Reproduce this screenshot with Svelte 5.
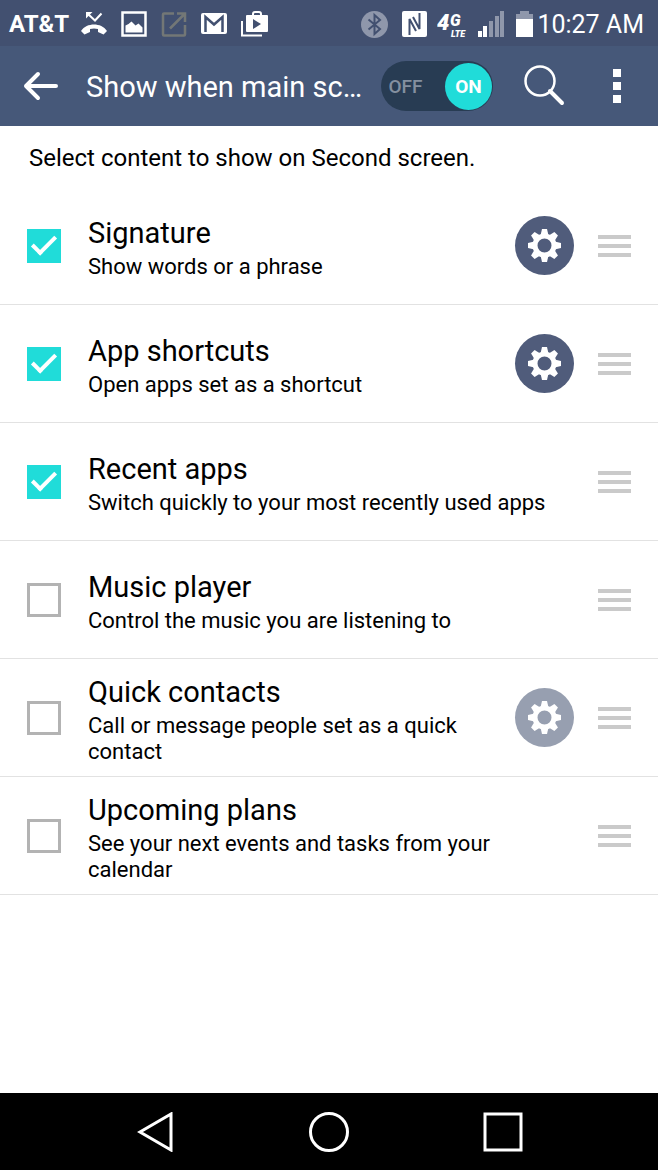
<script lang="ts">
	interface Item {
		id: string;
		title: string;
		detail: string;
		checked: boolean;
		settings: boolean;
	}

	let items = $state<Item[]>([
		{ id: 'signature', title: 'Signature', detail: 'Show words or a phrase', checked: true, settings: true },
		{ id: 'shortcuts', title: 'App shortcuts', detail: 'Open apps set as a shortcut', checked: true, settings: true },
		{ id: 'recent', title: 'Recent apps', detail: 'Switch quickly to your most recently used apps', checked: true, settings: false },
		{ id: 'music', title: 'Music player', detail: 'Control the music you are listening to', checked: false, settings: false },
		{ id: 'contacts', title: 'Quick contacts', detail: 'Call or message people set as a quick contact', checked: false, settings: true },
		{ id: 'plans', title: 'Upcoming plans', detail: 'See your next events and tasks from your calendar', checked: false, settings: false }
	]);

	let enabled = $state(true);
	const teeth = [0, 45, 90, 135, 180, 225, 270, 315];
</script>

<div class="screen">
	<div class="status">
		<div class="notifications">
			<span class="carrier">AT&amp;T</span>
			<svg width="26" height="26" viewBox="0 0 26 26" aria-hidden="true">
				<path d="M0 20C3 15.500 8 13.500 13 13.500s10 2 13 6.500l-3.500 3.500L17 21v-3q-4-1-8 0v3l-5.500 2.500Z" fill="#fff" />
				<path d="M5 1h6.500L5 7.500Z" fill="#fff" />
				<path d="M7 3l7 6.500 6.500-7" fill="none" stroke="#fff" stroke-width="2" />
			</svg>
			<svg width="26" height="26" viewBox="0 0 26 26" aria-hidden="true">
				<rect x="1.500" y="1.500" width="23" height="23" fill="none" stroke="#fff" stroke-width="2.500" />
				<path d="M4.500 21.500v-7l3-1.500 3-2.500 4 4 3-2 4 4v5Z" fill="#fff" />
			</svg>
			<svg width="26" height="26" viewBox="0 0 26 26" aria-hidden="true">
				<path d="M13 2.500H3Q2 2.500 2 3.500v20q0 1 1 1h20q1 0 1-1V14M16 2.500h8V11M24 2.500 9 17.500" fill="none" stroke="#737776" stroke-width="2.500" />
			</svg>
			<svg width="26" height="26" viewBox="0 0 26 26" aria-hidden="true">
				<rect y="2" width="26" height="21" rx="2" fill="#fff" />
				<path d="M4.500 21V6L13 13.500 21.500 6v15" fill="none" stroke="#425070" stroke-width="2.500" />
			</svg>
			<svg width="28" height="26" viewBox="0 0 28 26" aria-hidden="true">
				<path d="M1 10v14.500h20" fill="none" stroke="#fff" stroke-width="2" />
				<path d="M12 6V3q0-2 2-2h4q2 0 2 2v3" fill="none" stroke="#fff" stroke-width="2" />
				<rect x="5" y="4" width="22" height="17" rx="1" fill="#fff" />
				<path d="M12 8v10l8-5Z" fill="#425070" />
			</svg>
		</div>

		<div class="system">
			<svg width="27" height="27" viewBox="0 0 27 27" aria-hidden="true">
				<circle cx="13.500" cy="13.500" r="13.500" fill="#8f97ab" />
				<path d="M7.500 8.500 19 18l-5.500 5V4L19 9 7.500 18.500" fill="none" stroke="#425070" stroke-width="2" />
			</svg>
			<svg class="nfc" width="26" height="26" viewBox="0 0 26 26" aria-hidden="true">
				<rect x="1" width="25" height="26" rx="2" fill="#fff" />
				<path d="M8.500 24V8l6.500 12" fill="none" stroke="#425070" stroke-width="2" />
				<path d="M18.500 2v16L12 6" fill="none" stroke="#425070" stroke-width="2" />
			</svg>
			<svg class="network" width="34" height="26" viewBox="0 0 34 26" role="img" aria-label="4G LTE">
				<text x="0" y="19" font-size="22">4</text>
				<text x="13" y="15" font-size="16">G</text>
				<text x="14" y="26" font-size="9">LTE</text>
			</svg>
			<svg class="signal" width="26" height="26" viewBox="0 0 26 26" aria-hidden="true">
				<path d="M0 20h4v6H0ZM5 15h4v11H5Z" fill="#fff" />
				<path d="M11 10h4v16h-4ZM17 5h4v21h-4ZM22 0h4v26h-4Z" fill="#8f97ab" />
			</svg>
			<svg class="battery" width="17" height="26" viewBox="0 0 17 26" aria-hidden="true">
				<path d="M0 3h4V0h9v3h4v7H0Z" fill="#8f97ab" />
				<path d="M0 8h17v18H0Z" fill="#fff" />
			</svg>
			<span class="time">10:27 AM</span>
		</div>
	</div>

	<header>
		<button class="back" type="button" aria-label="Back">
			<svg width="36" height="30" viewBox="0 0 36 30">
				<path d="M15 3 3 15l12 12M3 15h30" fill="none" stroke="#fff" stroke-width="4" stroke-linecap="round" stroke-linejoin="round" />
			</svg>
		</button>
		<h1>Show when main sc…</h1>
		<button class="switch" class:enabled type="button" role="switch" aria-checked={enabled} aria-label="Second screen" onclick={() => (enabled = !enabled)}>
			<span>OFF</span>
			<span>ON</span>
		</button>
		<button class="search" type="button" aria-label="Search">
			<svg width="42" height="42" viewBox="0 0 42 42">
				<circle cx="17" cy="16" r="14.500" fill="none" stroke="#fff" stroke-width="2.500" />
				<path d="m27 26 12 12" stroke="#fff" stroke-width="4" stroke-linecap="round" />
			</svg>
		</button>
		<button class="more" type="button" aria-label="More options">
			<svg width="8" height="36" viewBox="0 0 8 36">
				<path d="M0 1h8v8H0ZM0 14h8v8H0ZM0 27h8v8H0Z" fill="#fff" />
			</svg>
		</button>
	</header>

	<main>
		<p class="intro">Select content to show on Second screen.</p>
		<ul>
			{#each items as item (item.id)}
				<li>
					<input type="checkbox" id={item.id} bind:checked={item.checked} />
					<label for={item.id}>
						<span class="title">{item.title}</span>
						<span class="detail">{item.detail}</span>
					</label>
					{#if item.settings}
						<button class="settings" type="button" disabled={!item.checked} aria-label={`${item.title} settings`}>
							<svg width="35" height="35" viewBox="-17.500 -17.500 35 35">
								<circle r="9.500" fill="none" stroke="#fff" stroke-width="5" />
								{#each teeth as angle}
									<path d="M-4-10-2.500-16.500h5L4-10Z" fill="#fff" transform={`rotate(${angle})`} />
								{/each}
							</svg>
						</button>
					{/if}
					<button class="handle" type="button" aria-label={`Move ${item.title}`}>
						<svg width="33" height="22" viewBox="0 0 33 22">
							<path d="M0 0h33v4H0ZM0 9h33v4H0ZM0 18h33v4H0Z" fill="#cacaca" />
						</svg>
					</button>
				</li>
			{/each}
		</ul>
	</main>

	<nav>
		<button type="button" aria-label="Back">
			<svg width="40" height="40" viewBox="0 0 40 40"><path d="M36 2v36L5 20Z" /></svg>
		</button>
		<button type="button" aria-label="Home">
			<svg width="40" height="40" viewBox="0 0 40 40"><circle cx="20" cy="20" r="18.500" /></svg>
		</button>
		<button type="button" aria-label="Recent apps">
			<svg width="40" height="40" viewBox="0 0 40 40"><path d="M2 2h36v36H2Z" /></svg>
		</button>
	</nav>
</div>

<style>
	:global(body) {
		margin: 0;
	}

	.screen {
		display: flex;
		flex-direction: column;
		min-height: 100vh;
		background: #fff;
		color: #000;
		font-family: Roboto, sans-serif;
	}

	button {
		display: grid;
		place-items: center;
		flex: none;
		padding: 0;
		border: none;
		background: none;
		font: inherit;
		cursor: pointer;
	}

	svg {
		display: block;
		flex: none;
	}

	.status {
		display: flex;
		justify-content: space-between;
		align-items: center;
		box-sizing: border-box;
		height: 46px;
		padding: 2px 14px 0 9px;
		background: #425070;
		color: #fff;
	}

	.notifications,
	.system {
		display: flex;
		align-items: center;
	}

	.notifications {
		gap: 14px;
	}

	.carrier {
		margin-right: -2px;
		font-size: 24px;
		font-weight: 700;
	}

	.nfc {
		margin-left: 13px;
	}

	.network {
		margin: 0 7px 0 10px;
		fill: #fff;
		font-style: italic;
		font-weight: 900;
	}

	.battery {
		margin: 0 4px 0 12px;
	}

	.time {
		font-size: 25px;
	}

	header {
		display: flex;
		align-items: center;
		height: 80px;
		padding: 0 37px 0 23px;
		background: #465879;
		color: #fff;
	}

	h1 {
		flex: 1;
		min-width: 0;
		margin: 0 14px 0 27px;
		padding-top: 2px;
		overflow: hidden;
		font-size: 29px;
		font-weight: 400;
		line-height: 40px;
		text-overflow: ellipsis;
		white-space: nowrap;
	}

	.switch {
		display: flex;
		justify-content: space-between;
		align-items: center;
		width: 112px;
		height: 50px;
		padding: 0 1px;
		border-radius: 25px;
		background: #283c53;
		color: #8490a0;
		font-size: 19px;
		font-weight: 500;
	}

	.switch span {
		display: grid;
		place-items: center;
		width: 47px;
		height: 47px;
		border-radius: 50%;
	}

	.switch.enabled span:last-child,
	.switch:not(.enabled) span:first-child {
		background: #20dcd9;
		color: #fff;
		font-weight: 700;
	}

	.search {
		margin: 0 48px 0 30px;
	}

	main {
		flex: 1;
	}

	.intro {
		margin: 0;
		padding: 18px 29px 15px;
		font-size: 24px;
		line-height: 28px;
	}

	ul {
		margin: 0;
		padding: 0;
		list-style: none;
	}

	li {
		display: flex;
		align-items: center;
		box-sizing: border-box;
		min-height: 118px;
		padding: 0 27px;
		border-bottom: 1px solid #e2e2e2;
	}

	input {
		display: grid;
		place-items: center;
		flex: none;
		box-sizing: border-box;
		width: 34px;
		height: 34px;
		margin: 0;
		border: 3px solid #b3b3b3;
		appearance: none;
	}

	input:checked {
		border-color: #20dcd9;
		background: #20dcd9;
	}

	input:checked::before {
		content: '';
		width: 20px;
		height: 9px;
		margin-bottom: 6px;
		border: solid #fff;
		border-width: 0 0 4px 4px;
		transform: rotate(-45deg);
	}

	label {
		flex: 1;
		min-width: 0;
		padding-left: 27px;
	}

	.title,
	.detail {
		display: block;
	}

	.title {
		font-size: 29px;
		line-height: 42px;
	}

	.detail {
		max-width: 464px;
		font-size: 22px;
		line-height: 26px;
	}

	.settings {
		width: 59px;
		height: 59px;
		margin-right: 24px;
		border-radius: 50%;
		background: #505c7b;
	}

	.settings:disabled {
		background: #979fb0;
	}

	nav {
		display: flex;
		justify-content: center;
		align-items: center;
		gap: 134px;
		height: 77px;
		background: #000;
	}

	nav svg {
		fill: none;
		stroke: #fff;
		stroke-width: 3;
	}
</style>
